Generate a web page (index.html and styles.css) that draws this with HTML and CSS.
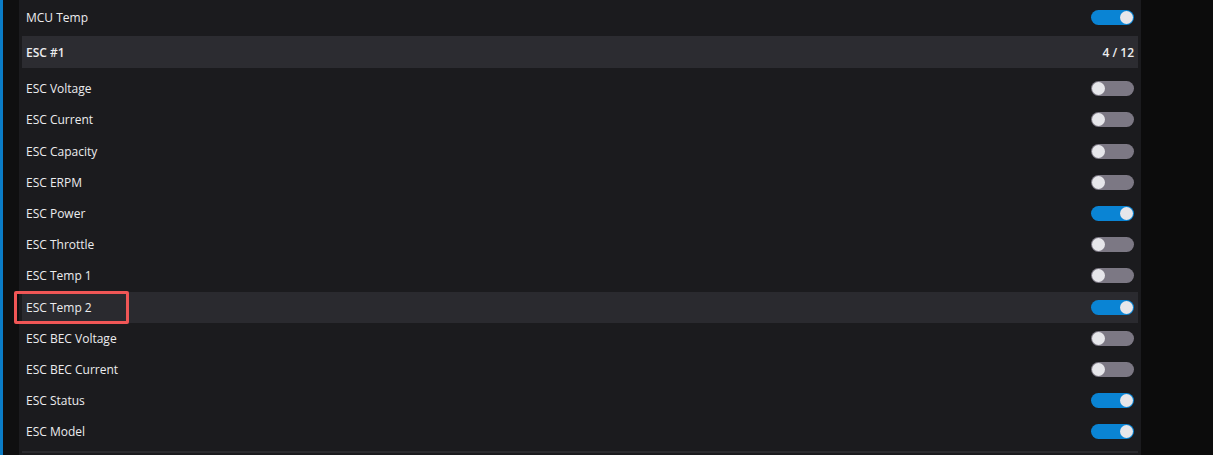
FILE: index.html
```html
<!DOCTYPE html>
<html lang="en">
<head>
<meta charset="utf-8">
<title>Telemetry sensors</title>
<link rel="stylesheet" href="styles.css">
</head>
<body>
<div class="layout">
  <div class="accent"></div>
  <div class="gutter"></div>
  <main class="panel">
    <div class="row"><span class="label">MCU Temp</span><span class="toggle on"></span></div>
    <div class="group-head"><span>ESC #1</span><span>4 / 12</span></div>
    <div class="row"><span class="label">ESC Voltage</span><span class="toggle"></span></div>
    <div class="row"><span class="label">ESC Current</span><span class="toggle"></span></div>
    <div class="row"><span class="label">ESC Capacity</span><span class="toggle"></span></div>
    <div class="row"><span class="label">ESC ERPM</span><span class="toggle"></span></div>
    <div class="row"><span class="label">ESC Power</span><span class="toggle on"></span></div>
    <div class="row"><span class="label">ESC Throttle</span><span class="toggle"></span></div>
    <div class="row"><span class="label">ESC Temp 1</span><span class="toggle"></span></div>
    <div class="row active"><span class="label">ESC Temp 2</span><span class="toggle on"></span><span class="mark"></span></div>
    <div class="row"><span class="label">ESC BEC Voltage</span><span class="toggle"></span></div>
    <div class="row"><span class="label">ESC BEC Current</span><span class="toggle"></span></div>
    <div class="row"><span class="label">ESC Status</span><span class="toggle on"></span></div>
    <div class="row"><span class="label">ESC Model</span><span class="toggle on"></span></div>
    <div class="divider"></div>
  </main>
</div>
</body>
</html>
```

FILE: styles.css
```css
* { box-sizing: border-box; }
html, body { margin: 0; padding: 0; }
body {
  background: #0c0c0c;
  font-family: "Open Sans", "Noto Sans", sans-serif;
  font-size: 12px;
  color: #ececee;
  height: 455px;
  overflow: hidden;
}
.layout {
  display: flex;
  height: 455px;
}
.accent {
  width: 3px;
  background: #0a7cc6;
}
.gutter {
  width: 16px;
  background: #0f0f10;
}
.panel {
  width: 1122px;
  background: #1b1b1e;
  padding: 2px 3px 0;
  display: flex;
  flex-direction: column;
}
.row {
  position: relative;
  flex: none;
  height: 31.2px;
  display: flex;
  align-items: center;
  justify-content: space-between;
  padding: 0 4px;
}
.row.active {
  background: #2a2a2f;
}
.group-head {
  flex: none;
  height: 32px;
  margin: 3px 0 5px;
  background: #2c2c31;
  display: flex;
  align-items: center;
  justify-content: space-between;
  padding: 0 4px;
  font-weight: 600;
}
.toggle {
  position: relative;
  width: 43px;
  height: 15px;
  border-radius: 8px;
  background: #7c7884;
}
.toggle::after {
  content: "";
  position: absolute;
  top: 1px;
  left: 1px;
  width: 13px;
  height: 13px;
  border-radius: 50%;
  background: #e6e6ea;
}
.toggle.on {
  background: #0a84d4;
}
.toggle.on::after {
  left: auto;
  right: 1px;
}
.mark {
  position: absolute;
  left: -8px;
  top: -1px;
  width: 115px;
  height: 33px;
  border: 3px solid #f05656;
  border-radius: 2px;
}
.divider {
  flex: none;
  height: 2px;
  margin-top: 4px;
  background: #2a2a2e;
}
```
